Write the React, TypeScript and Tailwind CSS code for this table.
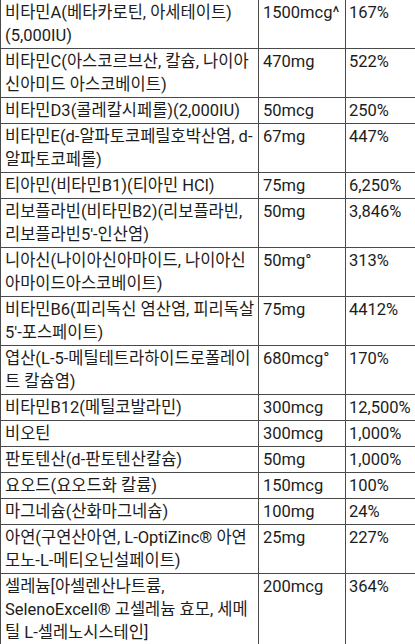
import React from "react";

type Row = { name: string[]; amount: string; dv: string };

const rows: Row[] = [
  { name: ["비타민A(베타카로틴, 아세테이트)", "(5,000IU)"], amount: "1500mcg^", dv: "167%" },
  { name: ["비타민C(아스코르브산, 칼슘, 나이아", "신아미드 아스코베이트)"], amount: "470mg", dv: "522%" },
  { name: ["비타민D3(콜레칼시페롤)(2,000IU)"], amount: "50mcg", dv: "250%" },
  { name: ["비타민E(d-알파토코페릴호박산염, d-", "알파토코페롤)"], amount: "67mg", dv: "447%" },
  { name: ["티아민(비타민B1)(티아민 HCl)"], amount: "75mg", dv: "6,250%" },
  { name: ["리보플라빈(비타민B2)(리보플라빈,", "리보플라빈5'-인산염)"], amount: "50mg", dv: "3,846%" },
  { name: ["니아신(나이아신아마이드, 나이아신", "아마이드아스코베이트)"], amount: "50mg°", dv: "313%" },
  { name: ["비타민B6(피리독신 염산염, 피리독살", "5'-포스페이트)"], amount: "75mg", dv: "4412%" },
  { name: ["엽산(L-5-메틸테트라하이드로폴레이", "트 칼슘염)"], amount: "680mcg°", dv: "170%" },
  { name: ["비타민B12(메틸코발라민)"], amount: "300mcg", dv: "12,500%" },
  { name: ["비오틴"], amount: "300mcg", dv: "1,000%" },
  { name: ["판토텐산(d-판토텐산칼슘)"], amount: "50mg", dv: "1,000%" },
  { name: ["요오드(요오드화 칼륨)"], amount: "150mcg", dv: "100%" },
  { name: ["마그네슘(산화마그네슘)"], amount: "100mg", dv: "24%" },
  { name: ["아연(구연산아연, L-OptiZinc® 아연", "모노-L-메티오닌설페이트)"], amount: "25mg", dv: "227%" },
  {
    name: ["셀레늄[아셀렌산나트륨,", "SelenoExcell® 고셀레늄 효모, 세메", "틸 L-셀레노시스테인]"],
    amount: "200mcg",
    dv: "364%",
  },
];

export default function App() {
  return (
    <div
      className="w-[415px] h-[644px] overflow-hidden bg-white text-[#1c1c1c] text-[16.5px] leading-[23px]"
      style={{ fontFamily: 'Roboto, "Noto Sans CJK KR", sans-serif' }}
    >
      <table className="table-fixed border-separate border-spacing-0 w-[445px]">
        <colgroup>
          <col className="w-[258px]" />
          <col className="w-[87px]" />
          <col className="w-[100px]" />
        </colgroup>
        <tbody>
          {rows.map((r, i) => (
            <tr key={i}>
              <td className="align-top border-l border-b border-[#4a4a4a] pl-[4px] pr-[2px] pt-[1px] pb-[1px]">
                {r.name.map((l, j) => (
                  <div key={j} className="whitespace-nowrap">
                    {l}
                  </div>
                ))}
              </td>
              <td className="align-top border-l border-b border-[#4a4a4a] pl-[4px] pt-[1px] pb-[1px] whitespace-nowrap">
                {r.amount}
              </td>
              <td className="align-top border-l border-b border-[#4a4a4a] pl-[3px] pt-[1px] pb-[1px] whitespace-nowrap">
                {r.dv}
              </td>
            </tr>
          ))}
        </tbody>
      </table>
    </div>
  );
}
